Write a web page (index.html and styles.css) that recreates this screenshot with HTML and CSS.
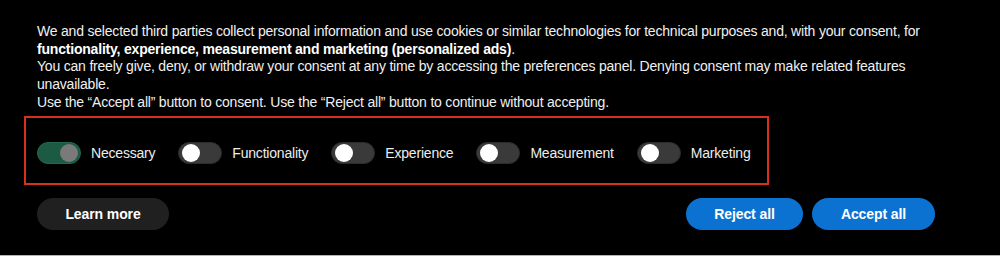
FILE: index.html
```html
<!DOCTYPE html>
<html lang="en">
<head>
<meta charset="utf-8">
<title>Cookie consent</title>
<link rel="stylesheet" href="styles.css">
</head>
<body>
<div class="banner">
  <div class="text">
    <p>We and selected third parties collect personal information and use cookies or similar technologies for technical purposes and, with your consent, for <strong>functionality, experience, measurement and marketing (personalized ads)</strong>.</p>
    <p>You can freely give, deny, or withdraw your consent at any time by accessing the preferences panel. Denying consent may make related features unavailable.</p>
    <p>Use the “Accept all” button to consent. Use the “Reject all” button to continue without accepting.</p>
  </div>
  <div class="prefs">
    <label class="pref"><span class="toggle on"><span class="knob"></span></span><span class="name">Necessary</span></label>
    <label class="pref"><span class="toggle"><span class="knob"></span></span><span class="name">Functionality</span></label>
    <label class="pref"><span class="toggle"><span class="knob"></span></span><span class="name">Experience</span></label>
    <label class="pref"><span class="toggle"><span class="knob"></span></span><span class="name">Measurement</span></label>
    <label class="pref"><span class="toggle"><span class="knob"></span></span><span class="name">Marketing</span></label>
  </div>
  <div class="actions">
    <button class="btn dark learn">Learn more</button>
    <div class="right">
      <button class="btn blue reject">Reject all</button>
      <button class="btn blue accept">Accept all</button>
    </div>
  </div>
</div>
</body>
</html>
```
FILE: styles.css
```css
html, body {
  margin: 0;
  padding: 0;
  background: #000;
}
.banner {
  box-sizing: border-box;
  height: 256px;
  background: #000;
  border-bottom: 1px solid #b4b4b4;
  padding: 23px 65px 0 37px;
  font-family: "Liberation Sans", Arial, sans-serif;
  font-size: 14px;
  letter-spacing: -0.2px;
  color: #f0f0f0;
}
.text p {
  margin: 0;
  line-height: 17.7px;
}
.text strong {
  font-weight: 700;
  color: #fff;
}
.prefs {
  display: flex;
  align-items: center;
  gap: 23px;
  width: max-content;
  margin: 4px 0 0 -13px;
  padding: 24px 17px 19px 11px;
  border: 2px solid #d8301c;
}
.pref {
  display: flex;
  align-items: center;
  gap: 10px;
}
.name {
  color: #ededed;
  line-height: 22px;
}
.toggle {
  box-sizing: border-box;
  position: relative;
  width: 44px;
  height: 22px;
  border-radius: 11px;
  background: #3a3a3a;
  border: 1px solid #2c2c2c;
}
.toggle .knob {
  position: absolute;
  top: 1px;
  left: 3px;
  width: 18px;
  height: 18px;
  border-radius: 50%;
  background: #fff;
}
.toggle.on {
  background: #1c5a44;
  border-color: #23684f;
}
.toggle.on .knob {
  left: auto;
  right: 2px;
  background: #7a7a7a;
}
.actions {
  display: flex;
  justify-content: space-between;
  align-items: center;
  margin-top: 13px;
}
.right {
  display: flex;
  gap: 9px;
}
.btn {
  height: 32px;
  border: 0;
  border-radius: 16px;
  padding: 0;
  font-family: "Liberation Sans", Arial, sans-serif;
  font-size: 14px;
  letter-spacing: -0.1px;
  font-weight: 700;
  color: #fff;
  text-align: center;
}
.btn.dark {
  background: #202020;
}
.btn.blue {
  background: #0b72d2;
}
.learn { width: 132px; }
.reject { width: 117px; }
.accept { width: 123px; }
```
